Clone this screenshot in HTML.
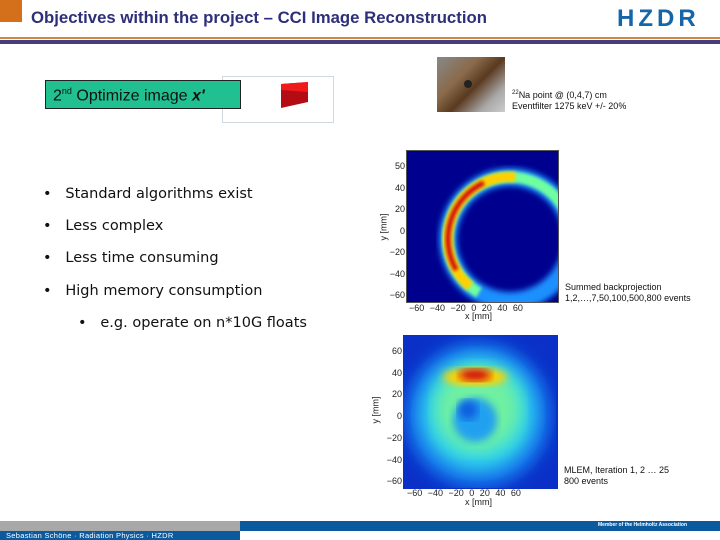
<!DOCTYPE html>
<html><head><meta charset="utf-8"><style>
body{margin:0;width:720px;height:540px;position:relative;overflow:hidden;background:#fff;font-family:"Liberation Sans",sans-serif}
.a{position:absolute}
.b{font-family:"DejaVu Sans","Liberation Sans",sans-serif;font-size:14.5px;color:#111}
.t{font-size:9px;color:#111;line-height:11px}
.ax{font-size:9px;color:#222}
</style></head><body>
<div class="a" style="left:0;top:0;width:22px;height:22px;background:#d46f1c"></div>
<div class="a" style="left:31px;top:8px;font-size:17px;font-weight:bold;color:#2e2f7a;transform:scaleX(0.985);transform-origin:0 0;white-space:nowrap">Objectives within the project – CCI Image Reconstruction</div>
<div class="a" style="left:617px;top:5px;font-size:24px;font-weight:bold;color:#1565a8;letter-spacing:4px">HZDR</div>
<div class="a" style="left:0;top:37px;width:720px;height:2px;background:#d08a3c"></div>
<div class="a" style="left:0;top:40px;width:720px;height:4px;background:#4a3d7d"></div>

<div class="a" style="left:222px;top:76px;width:112px;height:47px;border:1px solid #cdd8e0;box-sizing:border-box"></div>
<div class="a" style="left:45px;top:80px;width:196px;height:29px;background:#20c090;border:1px solid #222;box-sizing:border-box"></div>
<div class="a" style="left:53px;top:86px;font-size:16px;color:#111">2<sup style="font-size:9px">nd</sup> Optimize image <b><i>x'</i></b></div>
<svg class="a" style="left:278px;top:80px" width="32" height="30"><polygon points="3,4 30,2 30,22 3,28" fill="#b30c14"/><polygon points="3,4 30,2 30,12 3,10" fill="#ef1b1b"/></svg>

<div class="a" style="left:437px;top:57px;width:68px;height:55px;background:linear-gradient(135deg,#888 0%,#8a6a4a 35%,#5a3a20 55%,#aaa 80%,#ccc)"></div>
<div class="a" style="left:464px;top:80px;width:8px;height:8px;border-radius:50%;background:#222"></div>
<div class="a t" style="left:512px;top:88px"><sup style="font-size:6px">22</sup>Na point @ (0,4,7) cm<br>Eventfilter 1275 keV +/- 20%</div>

<div class="a b" style="left:43px;top:186px">•&nbsp;&nbsp;&nbsp;Standard algorithms exist</div>
<div class="a b" style="left:43px;top:218px">•&nbsp;&nbsp;&nbsp;Less complex</div>
<div class="a b" style="left:43px;top:250px">•&nbsp;&nbsp;&nbsp;Less time consuming</div>
<div class="a b" style="left:43px;top:283px">•&nbsp;&nbsp;&nbsp;High memory consumption</div>
<div class="a b" style="left:78px;top:315px">•&nbsp;&nbsp;&nbsp;e.g. operate on n*10G floats</div>

<svg class="a" style="left:406px;top:150px" width="153" height="153">
<defs><filter id="f1"><feGaussianBlur stdDeviation="3"/></filter><filter id="f2"><feGaussianBlur stdDeviation="1.5"/></filter><clipPath id="c1"><rect width="153" height="153"/></clipPath></defs>
<rect width="153" height="153" fill="#00008f"/>
<g clip-path="url(#c1)">
<circle cx="104" cy="89" r="62" fill="none" stroke="#1a90ff" stroke-width="18" filter="url(#f1)"/>
<path d="M73,142.7 A62,62 0 1 1 165,99.8" fill="none" stroke="#70ffa0" stroke-width="11" filter="url(#f2)"/>
<path d="M64.1,136.5 A62,62 0 0 1 109.4,27.2" fill="none" stroke="#ffd000" stroke-width="10" filter="url(#f2)"/>
<path d="M50.3,120 A62,62 0 0 1 77.8,32.8" fill="none" stroke="#d01010" stroke-width="5" filter="url(#f2)"/>
</g>
<rect x="0.5" y="0.5" width="152" height="152" fill="none" stroke="#555"/>
</svg>
<div class="a ax" style="left:380px;top:156px;line-height:21.5px;text-align:right;width:25px">50<br>40<br>20<br>0<br>−20<br>−40<br>−60</div>
<div class="a ax" style="left:409px;top:303px;word-spacing:3px">−60 −40 −20 0 20 40 60</div>
<div class="a ax" style="left:465px;top:311px">x [mm]</div>
<div class="a ax" style="left:370px;top:222px;transform:rotate(-90deg)">y [mm]</div>
<div class="a t" style="left:565px;top:282px">Summed backprojection<br>1,2,…,7,50,100,500,800 events</div>

<svg class="a" style="left:403px;top:335px" width="155" height="154">
<defs><filter id="f3"><feGaussianBlur stdDeviation="8"/></filter><filter id="f4"><feGaussianBlur stdDeviation="4"/></filter></defs>
<rect width="155" height="154" fill="#0a30c8"/>
<g clip-path="url(#c1)">
<circle cx="75" cy="80" r="72" fill="#1880f0" filter="url(#f3)"/>
<circle cx="75" cy="78" r="56" fill="#30d8e8" filter="url(#f3)"/>
<circle cx="75" cy="74" r="42" fill="#70f0a0" filter="url(#f3)"/>
<circle cx="72" cy="85" r="22" fill="#20a0f0" filter="url(#f4)"/>
<circle cx="65" cy="75" r="10" fill="#1060e0" filter="url(#f4)"/>
<ellipse cx="72" cy="42" rx="32" ry="9" fill="#ffd000" filter="url(#f4)"/>
<ellipse cx="72" cy="40" rx="16" ry="6" fill="#d01010" filter="url(#f4)"/>
</g>
</svg>
<div class="a ax" style="left:376px;top:341px;line-height:21.7px;text-align:right;width:26px">60<br>40<br>20<br>0<br>−20<br>−40<br>−60</div>
<div class="a ax" style="left:407px;top:488px;word-spacing:3px">−60 −40 −20 0 20 40 60</div>
<div class="a ax" style="left:465px;top:497px">x [mm]</div>
<div class="a ax" style="left:362px;top:405px;transform:rotate(-90deg)">y [mm]</div>
<div class="a t" style="left:564px;top:465px">MLEM, Iteration 1, 2 … 25<br>800 events</div>

<div class="a" style="left:0;top:521px;width:240px;height:10px;background:#a8a8a8"></div>
<div class="a" style="left:240px;top:521px;width:480px;height:10px;background:#0b5a9e"></div>
<div class="a" style="left:598px;top:522px;font-size:5px;color:#fff;font-weight:bold">Member of the Helmholtz Association</div>
<div class="a" style="left:0;top:531px;width:240px;height:9px;background:#0b5a9e"></div>
<div class="a" style="left:6px;top:531px;font-size:7.5px;color:#fff;letter-spacing:0.3px">Sebastian Schöne · Radiation Physics · HZDR</div>
</body></html>
